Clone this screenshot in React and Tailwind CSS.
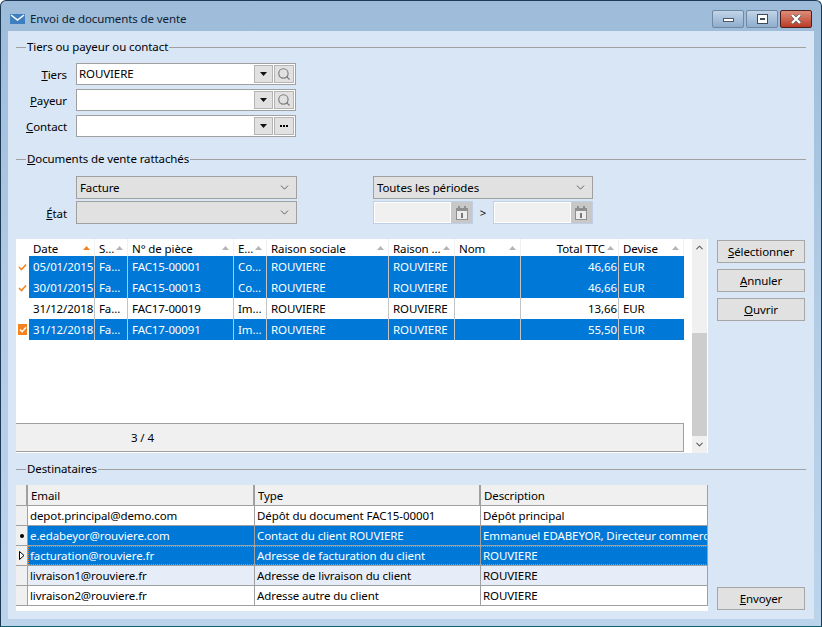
import { ChevronDown, ChevronUp, Search } from "lucide-react";

const DOCUMENTS = [
  { date: "05/01/2015", s: "Fa...", num: "FAC15-00001", e: "Co...", total: "46,66", selected: true, mark: "check" },
  { date: "30/01/2015", s: "Fa...", num: "FAC15-00013", e: "Co...", total: "46,66", selected: true, mark: "check" },
  { date: "31/12/2018", s: "Fa...", num: "FAC17-00019", e: "Im...", total: "13,66", selected: false, mark: null },
  { date: "31/12/2018", s: "Fa...", num: "FAC17-00091", e: "Im...", total: "55,50", selected: true, mark: "box" },
];

const COLUMNS = [
  { label: "Date", width: "w-[66px]", arrow: "orange" },
  { label: "S...", width: "w-[33px]" },
  { label: "N° de pièce", width: "w-[106px]" },
  { label: "E...", width: "w-[33px]" },
  { label: "Raison sociale", width: "w-[122px]" },
  { label: "Raison ...", width: "w-[66px]" },
  { label: "Nom", width: "w-[66px]" },
  { label: "Total TTC", width: "w-[98px]", right: true },
  { label: "Devise", width: "w-[65px]", last: true },
];

const RECIPIENTS = [
  { email: "depot.principal@demo.com", type: "Dépôt du document FAC15-00001", desc: "Dépôt principal", bg: "bg-white" },
  { email: "e.edabeyor@rouviere.com", type: "Contact du client ROUVIERE", desc: "Emmanuel EDABEYOR, Directeur commercial", bg: "bg-[#0078d7] text-white", mark: "dot" },
  { email: "facturation@rouviere.fr", type: "Adresse de facturation du client", desc: "ROUVIERE", bg: "bg-[#0078d7] text-white", mark: "arrow", focus: true },
  { email: "livraison1@rouviere.fr", type: "Adresse de livraison du client", desc: "ROUVIERE", bg: "bg-[#e6edf8]" },
  { email: "livraison2@rouviere.fr", type: "Adresse autre du client", desc: "ROUVIERE", bg: "bg-white" },
];

function Legend({ children }) {
  return (
    <div className="flex h-4 items-center">
      <div className="h-px w-[10px] bg-[#a0a0a0]" />
      <span className="whitespace-nowrap px-[1px] text-black">{children}</span>
      <div className="h-px flex-1 bg-[#a0a0a0]" />
    </div>
  );
}

function SortArrow({ orange }) {
  return (
    <svg width="7" height="4" viewBox="0 0 7 4" className="shrink-0">
      <path d="M3.5 0 7 4H0z" fill={orange ? "#f58220" : "#b4b4b4"} />
    </svg>
  );
}

function Picker({ value, icon }) {
  return (
    <div className="flex h-[22px] w-[220px] items-center border border-[#a0a0a0] bg-white pr-[1px]">
      <div className="flex-1 pl-[2px]">{value}</div>
      <div className="flex h-[18px] w-[19px] items-center justify-center border border-[#b4b4b4] bg-[#e1e1e1]">
        <svg width="7" height="4" viewBox="0 0 7 4">
          <path d="M0 0h7L3.5 4z" fill="#111" />
        </svg>
      </div>
      <div className="ml-[1px] flex h-[18px] w-[20px] items-center justify-center border border-[#b4b4b4] bg-[#e1e1e1]">
        {icon === "search"
          ? <Search size={14} strokeWidth={2} className="text-[#7c7c7c]" />
          : <span className="flex gap-[1px]">
              <i className="h-[2px] w-[2px] bg-black" />
              <i className="h-[2px] w-[2px] bg-black" />
              <i className="h-[2px] w-[2px] bg-black" />
            </span>}
      </div>
    </div>
  );
}

function FormRow({ label, rest, value, icon }) {
  return (
    <div className="flex h-[22px] items-center">
      <div className="mt-[2px] w-[51px] text-right">
        <u>{label}</u>
        {rest}
      </div>
      <div className="ml-[9px]">
        <Picker value={value} icon={icon} />
      </div>
    </div>
  );
}

function Select({ value, width }) {
  return (
    <div className={`${width} flex h-[23px] items-center justify-between border border-[#a0a0a0] bg-[#e1e1e1] pl-[3px] pr-[5px]`}>
      <span className="leading-[23px]">{value}</span>
      <ChevronDown size={13} strokeWidth={1.5} className="text-[#444]" />
    </div>
  );
}

function DateField() {
  return (
    <div className="flex h-[23px] w-[100px] items-stretch border border-[#bfd0e6] bg-[#c8c8c8]">
      <div className="w-[77px] border border-white bg-[#f0f0f0]" />
      <div className="flex flex-1 items-center justify-center">
        <svg width="12" height="14" viewBox="0 0 12 14">
          <path d="M0 2h2V0h2v2h4V0h2v2h2v12H0z" fill="#8f8f8f" />
          <rect x="1" y="5" width="10" height="8" fill="#ededed" />
          <path d="M5 7h2v5H5z" fill="#777" />
        </svg>
      </div>
    </div>
  );
}

function ActionButton({ letter, rest }) {
  return (
    <button className="h-[23px] w-[88px] border border-[#a6a6a6] bg-[#e1e1e1] text-black">
      <u>{letter}</u>
      {rest}
    </button>
  );
}

function DocumentsGrid() {
  return (
    <div className="flex h-[214px] w-[692px] bg-white">
      <div className="flex w-[676px] flex-col">
        <div className="flex h-[17px] pl-[13px]">
          {COLUMNS.map((col) => (
            <div
              className={`${col.width} flex items-center gap-[2px] border-r border-[#f0f0f0] pl-[4px] pr-[4px] ${col.right ? "justify-end" : "justify-between"}`}
              key={col.label}
            >
              <span className="mt-[2px] whitespace-nowrap">{col.label}</span>
              <SortArrow orange={col.arrow === "orange"} />
            </div>
          ))}
        </div>
        {DOCUMENTS.map((doc) => (
          <div className="flex h-[21px]" key={doc.num}>
            <div className="flex w-[13px] items-center justify-center">
              {doc.mark === "check"
                ? <svg width="9" height="8" viewBox="0 0 9 8">
                    <path d="M1 4l2.5 2.5L8 1.5" fill="none" stroke="#f58220" strokeWidth="1.6" />
                  </svg>
                : null}
              {doc.mark === "box"
                ? <span className="flex h-[11px] w-[9px] items-center justify-center bg-[#f58220]">
                    <svg width="8" height="7" viewBox="0 0 9 8">
                      <path d="M1 4l2.5 2.5L8 1.5" fill="none" stroke="#fff" strokeWidth="1.6" />
                    </svg>
                  </span>
                : null}
            </div>
            <div className={`flex ${doc.selected ? "bg-[#0078d7] text-white" : "bg-white text-black"}`}>
              {[doc.date, doc.s, doc.num, doc.e, "ROUVIERE", "ROUVIERE", "", doc.total, "EUR"].map((text, index) => (
                <div
                  className={`${COLUMNS[index].width} overflow-hidden whitespace-nowrap ${COLUMNS[index].last ? "" : "border-r border-[#c4c4c4]"} pl-[4px] pr-[1px] leading-[22px] ${COLUMNS[index].right ? "text-right" : ""}`}
                  key={index}
                >
                  {text}
                </div>
              ))}
            </div>
          </div>
        ))}
        <div className="flex-1" />
        <div className="mr-[8px] h-[29px] border-y border-r border-[#a0a0a0] bg-[#f0f0f0] pl-[115px] leading-[28px]">
          3 / 4
        </div>
        <div className="h-px" />
      </div>
      <div className="flex w-[16px] flex-col bg-[#f0f0f0] pr-[1px] [box-shadow:inset_-1px_0_0_#fff]">
        <div className="flex h-[17px] items-center justify-center">
          <ChevronUp size={11} strokeWidth={2.5} className="text-[#606060]" />
        </div>
        <div className="h-[77px]" />
        <div className="h-[103px] bg-[#cdcdcd]" />
        <div className="flex flex-1 items-center justify-center">
          <ChevronDown size={11} strokeWidth={2.5} className="text-[#606060]" />
        </div>
      </div>
    </div>
  );
}

function RecipientsGrid() {
  return (
    <div className="h-[126px] w-[692px] bg-white">
      <div className="flex h-[21px] border-b border-[#a0a0a0] bg-[#f0f0f0]">
        <div className="w-[12px] border-r-2 border-[#a0a0a0]" />
        <div className="ml-[-1px] w-[228px] border-r-2 border-[#a0a0a0] pl-[4px] leading-[21px]">Email</div>
        <div className="w-[226px] border-r-2 border-[#a0a0a0] pl-[3px] leading-[21px]">Type</div>
        <div className="flex-1 border-r border-[#a0a0a0] pl-[3px] leading-[21px]">Description</div>
      </div>
      {RECIPIENTS.map((row) => (
        <div className="flex h-[20px] border-b border-[#a0a0a0]" key={row.email}>
          <div className="flex w-[12px] shrink-0 items-center justify-center border-r border-[#a0a0a0] bg-[#f0f0f0]">
            {row.mark === "dot" ? <span className="h-[4px] w-[4px] rounded-full bg-black" /> : null}
            {row.mark === "arrow"
              ? <svg width="6" height="9" viewBox="0 0 6 9">
                  <path d="M.5.5 5 4.5.5 8.5z" fill="#fff" stroke="#000" />
                </svg>
              : null}
          </div>
          <div className={`flex min-w-0 flex-1 ${row.bg} ${row.focus ? "outline-1 -outline-offset-1 outline-dotted outline-[#f58220]" : ""}`}>
            <div className="w-[227px] shrink-0 overflow-hidden whitespace-nowrap border-r border-[#a0a0a0] pl-[2px] leading-[20px]">{row.email}</div>
            <div className="w-[226px] shrink-0 overflow-hidden whitespace-nowrap border-r border-[#a0a0a0] pl-[2px] leading-[20px]">{row.type}</div>
            <div className="min-w-0 flex-1 overflow-hidden whitespace-nowrap border-r border-[#a0a0a0] pl-[2px] leading-[20px]">{row.desc}</div>
          </div>
        </div>
      ))}
    </div>
  );
}

export default function App() {
  return (
    <div className="flex h-[627px] w-[822px] flex-col overflow-hidden rounded-t-[6px] border border-[#1c3a55] border-b-[#0f5f70] bg-gradient-to-b from-[#9dbcd9] via-[#b3cce6] to-[#bcd3ec] font-['Noto_Sans',sans-serif] text-[11.5px] tracking-[-0.1px] text-black">
      <div className="flex h-[30px] shrink-0 items-center pl-[9px] pr-[9px] pt-[6px]">
        <svg width="15" height="10" viewBox="0 0 15 10">
          <rect width="15" height="10" fill="#3f7fc0" />
          <path d="M1 1l6.5 5L14 1" fill="none" stroke="#fff" strokeWidth="1.5" />
        </svg>
        <span className="ml-[5px] text-[#10202f]">Envoi de documents de vente</span>
        <div className="ml-auto flex gap-[2px]">
          <div className="flex h-[18px] w-[32px] items-end justify-center rounded-[2px] border border-[#6f88a4] bg-gradient-to-b from-[#c2d4e8] to-[#8fadcd] pb-[5px]">
            <span className="h-[4px] w-[11px] border border-[#4a5a6c] bg-white" />
          </div>
          <div className="flex h-[18px] w-[32px] items-center justify-center rounded-[2px] border border-[#6f88a4] bg-gradient-to-b from-[#c2d4e8] to-[#8fadcd]">
            <span className="flex h-[10px] w-[11px] items-center justify-center border border-[#3c4a5a] bg-white">
              <i className="h-[2px] w-[5px] bg-[#3c4a5a]" />
            </span>
          </div>
          <div className="flex h-[18px] w-[32px] items-center justify-center rounded-[2px] border border-[#4c1f1c] bg-gradient-to-b from-[#dc8d7a] to-[#b93a26]">
            <svg width="12" height="10" viewBox="0 0 12 10">
              <path d="M2 1l8 8M10 1l-8 8" stroke="#555" strokeWidth="3.6" />
              <path d="M2 1l8 8M10 1l-8 8" stroke="#fff" strokeWidth="2.4" />
            </svg>
          </div>
        </div>
      </div>

      <div className="mx-[7px] mb-[7px] flex-1 bg-[#d9e6f6] px-[8px] pb-[8px] pt-[8px]">
        <Legend>Tiers ou payeur ou contact</Legend>
        <div className="mt-[8px] flex flex-col gap-[4px]">
          <FormRow label="T" rest="iers" value="ROUVIERE" icon="search" />
          <FormRow label="P" rest="ayeur" icon="search" />
          <FormRow label="C" rest="ontact" icon="more" />
        </div>

        <div className="mt-[14px]">
          <Legend>
            <u>D</u>ocuments de vente rattachés
          </Legend>
        </div>
        <div className="mt-[9px] flex">
          <div className="ml-[60px] flex flex-col gap-[2px]">
            <Select value="Facture" width="w-[221px]" />
            <Select value="" width="w-[221px]" />
          </div>
          <div className="ml-[76px] flex w-[220px] flex-col gap-[2px]">
            <Select value="Toutes les périodes" width="w-[220px]" />
            <div className="flex items-center justify-between">
              <DateField />
              <span>&gt;</span>
              <DateField />
            </div>
          </div>
        </div>
        <div className="-mt-[23px] flex h-[23px] w-[51px] items-center justify-end">
          <span className="mt-[2px]">
            <u>É</u>tat
          </span>
        </div>

        <div className="mt-[15px] flex">
          <DocumentsGrid />
          <div className="ml-[9px] mt-[1px] flex flex-col gap-[6px]">
            <ActionButton letter="S" rest="électionner" />
            <ActionButton letter="A" rest="nnuler" />
            <ActionButton letter="O" rest="uvrir" />
          </div>
        </div>

        <div className="mt-[8px]">
          <Legend>Destinataires</Legend>
        </div>
        <div className="mt-[8px] flex">
          <RecipientsGrid />
          <div className="ml-[9px] mt-[102px]">
            <ActionButton letter="E" rest="nvoyer" />
          </div>
        </div>
      </div>
    </div>
  );
}
